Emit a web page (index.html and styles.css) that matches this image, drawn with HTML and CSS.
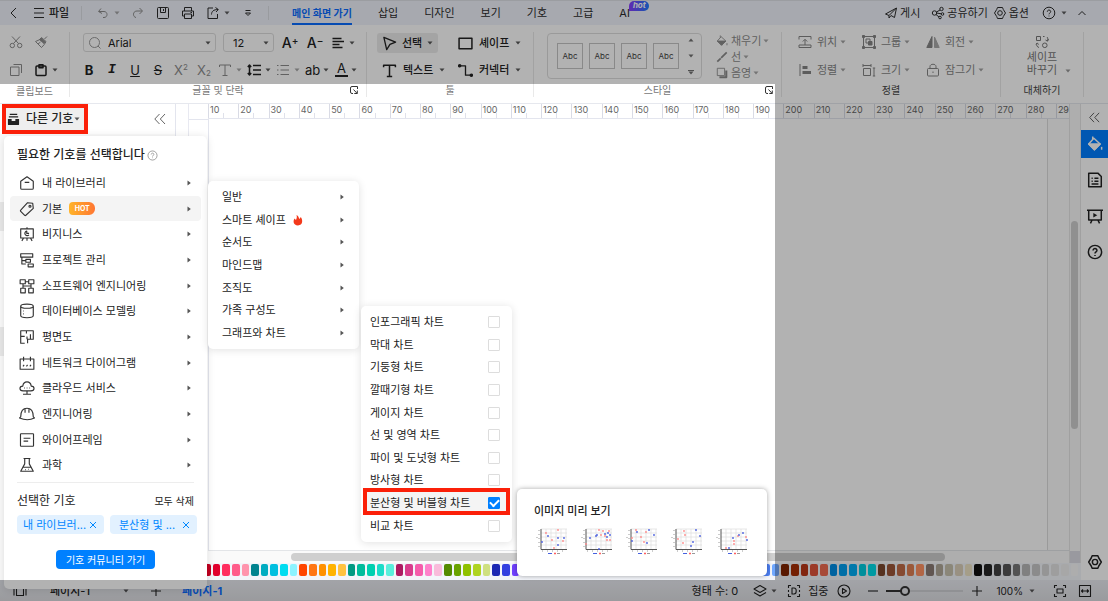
FILE: index.html
```html
<!DOCTYPE html>
<html lang="ko">
<head>
<meta charset="utf-8">
<title>다이어그램 편집기</title>
<meta name="viewport" content="width=device-width, initial-scale=1">
<link rel="stylesheet" href="styles.css">
</head>
<body>
<svg class="sprite" aria-hidden="true">
  <symbol id="caret" viewBox="0 0 6 4"><path d="M0.5 0.5h5L3 3.6z" fill="currentColor"/></symbol>
  <symbol id="arrow" viewBox="0 0 4 6"><path d="M0.5 0.4v5.2L3.8 3z" fill="currentColor"/></symbol>
  <symbol id="back" viewBox="0 0 14 14"><path d="M9 2 4 7l5 5"/></symbol>
  <symbol id="up" viewBox="0 0 14 14"><path d="M3.500 9 7 5.500 10.500 9"/></symbol>
  <symbol id="burger" viewBox="0 0 14 14"><path d="M2 2.500h10M2 7h10M2 11.500h10"/></symbol>
  <symbol id="undo" viewBox="0 0 14 14"><path d="M5 2.500 2.500 5.500 6 7.500M3 5.500h5c4 0 4 6 0 6H7"/></symbol>
  <symbol id="redo" viewBox="0 0 14 14"><path d="M8.500 2 11.500 5 8.500 8M11 5H6c-4.500 0-4.500 6-1 6.500"/></symbol>
  <symbol id="save" viewBox="0 0 14 14"><rect x="1.500" y="1.500" width="11" height="11" rx="1"/><path d="M4.500 2v4.500h5V2M7.500 3v2"/></symbol>
  <symbol id="print" viewBox="0 0 14 14"><path d="M3.500 5V1.500h7V5M3.500 10h-2V5h11v5h-2M3.500 8h7v4.500h-7zM9.500 6.500h1.500"/></symbol>
  <symbol id="export" viewBox="0 0 14 14"><path d="M7 2H2v10.500h9.500V8M5.500 8.500c0-3 2-5 6.500-5M9.500 1.500 12.300 3.500 10 6"/></symbol>
  <symbol id="more" viewBox="0 0 14 14"><path d="M4.500 4.500h5M4.500 7h5L7 9.500z"/></symbol>
  <symbol id="send" viewBox="0 0 14 14"><path d="M1.500 8 12.500 2l-2 9.500L7 9.500 5 12V9.500zM5 9.500 12 2.500"/></symbol>
  <symbol id="share" viewBox="0 0 14 14"><circle cx="3.500" cy="7" r="2.200"/><circle cx="10.500" cy="3" r="1.700"/><circle cx="11.500" cy="8" r="1.300"/><circle cx="9" cy="11.500" r="1.300"/><path d="M5.500 6 9 4M5.700 7l4.500.8M5 8.500 8 11"/></symbol>
  <symbol id="gear" viewBox="0 0 14 14"><path d="M4.500 1.500h5l.8 2 2.200 3.500-2.200 3.500-.8 2h-5l-.8-2L1.500 7l2.200-3.500z"/><circle cx="7" cy="7" r="2.300"/></symbol>
  <symbol id="help" viewBox="0 0 14 14"><circle cx="7" cy="7" r="5.800"/><path d="M5.300 5.700c0-2.300 3.500-2.200 3.400 0C8.700 7 7 6.900 7 8.300M7 9.600v.8"/></symbol>
  <symbol id="cut" viewBox="0 0 14 14"><circle cx="3.300" cy="10.500" r="2.200"/><circle cx="10.700" cy="10.500" r="2.200"/><path d="M4.500 8.500 11 1.500M9.500 8.500 3 1.500"/></symbol>
  <symbol id="brush" viewBox="0 0 14 14"><path d="M10.500 4 13 1.500M7.500 2.500 12 6.500M7.500 2.500 6 4.500 1.500 6.500 7.500 12.500 10.300 9.500 12 6.500M4 9 6.500 7"/><path d="M7 3 11.500 7 10 8.500 5.500 4.500z" fill="currentColor"/></symbol>
  <symbol id="copy" viewBox="0 0 14 14"><rect x="1.500" y="4" width="8.500" height="8.500"/><path d="M4.500 1.500h8V10"/></symbol>
  <symbol id="paste" viewBox="0 0 14 14"><rect x="2" y="3" width="10" height="9.500" rx="1"/><path d="M5 1.800h4v3H5z"/></symbol>
  <symbol id="search" viewBox="0 0 14 14"><circle cx="6.500" cy="6.500" r="5"/><path d="m10 10 2.500 2.500"/></symbol>
  <symbol id="align" viewBox="0 0 14 14"><path d="M1.500 2.500h9M1.500 5.500h11.500M1.500 8.500h7M1.500 11.500h10"/></symbol>
  <symbol id="spacing" viewBox="0 0 14 14"><path d="M6 2.500h8M6 7h8M6 11.500h8M2.500 2v10M.8 4 2.500 2l1.700 2M.8 10l1.700 2 1.700-2"/></symbol>
  <symbol id="list" viewBox="0 0 14 14"><path d="M4.500 2.500H13M4.500 7H13M4.500 11.500H13M1 2.500h1.500M1 7h1.500M1 11.500h1.500"/></symbol>
  <symbol id="cursor" viewBox="0 0 16 16"><path d="M2 1.500 14.500 6.500 8.500 9 5 14.500z"/></symbol>
  <symbol id="text" viewBox="0 0 14 14"><path d="M1.500 4V2h11v2M7 2v10.500M4.500 12.500h5"/></symbol>
  <symbol id="square" viewBox="0 0 14 14"><rect x="1" y="2" width="12" height="10"/></symbol>
  <symbol id="connector" viewBox="0 0 16 14"><path d="M2 2h6v10h6"/><circle cx="1.800" cy="2" r="1.200" fill="currentColor"/><circle cx="14.200" cy="12" r="1.200" fill="currentColor"/></symbol>
  <symbol id="fill" viewBox="0 0 14 14"><path d="M5 .5v2.500M6 2 11.500 7 6.500 12 1.500 7z"/><path d="M1.500 7h10l-5 5z" fill="currentColor"/><path d="M12.800 9.500v2.500"/></symbol>
  <symbol id="line" viewBox="0 0 14 14"><path d="M12.500 1.500 6 8M5.500 8.500 1.500 12.500" stroke-width="2"/></symbol>
  <symbol id="shadow" viewBox="0 0 14 14"><rect x="1.500" y="1.500" width="8.500" height="8.500"/><path d="M12 4v8H4" stroke-width="2.400"/></symbol>
  <symbol id="place" viewBox="0 0 14 14"><path d="M1 4.500V1.500h12v3M7 10V4.500M4.800 6.500 7 4.300l2.200 2.200M1 10h12v2.500H1z"/></symbol>
  <symbol id="arrange" viewBox="0 0 14 14"><path d="M2 1v12"/><path d="M4.500 4.500h5M4.500 9.500h8.500" stroke-width="3"/></symbol>
  <symbol id="group" viewBox="0 0 14 14"><rect x="1.500" y="1.500" width="11" height="11"/><rect x="4" y="4" width="4" height="4"/><rect x="6.500" y="6.500" width="3.500" height="3.500" fill="currentColor"/><path d="M.5 .5h2v2h-2zM11.500.5h2v2h-2zM.5 11.500h2v2h-2zM11.500 11.500h2v2h-2z" fill="currentColor"/></symbol>
  <symbol id="size" viewBox="0 0 14 14"><rect x="1.500" y="5.500" width="7" height="7"/><path d="M1 2.500h8M1 1v3M9 1v3M12 5v8M10.800 5h2.400M10.800 13h2.400"/></symbol>
  <symbol id="flip" viewBox="0 0 14 14"><path d="M6 1.500v11H.8z" fill="currentColor"/><path d="M8.500 2v10.500h4.700z" fill="currentColor" opacity=".7"/></symbol>
  <symbol id="lock" viewBox="0 0 14 14"><rect x="1.500" y="5.500" width="11" height="7.500" rx="1"/><path d="M4 5.500v-2c0-3 6-3 6 0v2M7 8.500v1.500"/></symbol>
  <symbol id="swap" viewBox="0 0 14 14"><path d="M1.500 1.500h4v4h-4zM8 1.500h1.500M12 2c1 1 1 2.500.5 4M10.500 5l2 1.200L13.500 4M2 8c-1 2 0 4 2 4.500M1 9.500 2.200 8l1.600 1.500"/><circle cx="9.800" cy="10.300" r="2.300"/></symbol>
  <symbol id="launch" viewBox="0 0 10 10"><path d="M4 8.500H3q-1.500 0-1.500-1.500V3q0-1.500 1.500-1.500h5.500V4M4.500 4.500 8 8.300M8.300 5.500v3h-3"/></symbol>
  <symbol id="collapse" viewBox="0 0 14 14"><path d="M6.500 2 1.800 7l4.700 5M12 2 7.300 7l4.700 5"/></symbol>
  <symbol id="drawer" viewBox="0 0 14 14"><path d="M3 1.500h8M2 4.200h10" stroke-width="1.200"/><path d="M1 6.500h4v2h4v-2h4V12q0 1-1 1H2q-1 0-1-1z" fill="currentColor" stroke="none"/></symbol>
  <symbol id="home" viewBox="0 0 14 14"><path d="M1.500 11.500v-6L7 1.500l5.500 4v6q0 1-1 1h-9q-1 0-1-1zM5 6.500h4"/></symbol>
  <symbol id="tag" viewBox="0 0 14 14"><path d="M7.500 1.500 12 2l.5 4.500L6 12.500Q5.500 13 5 12.500L1.500 9q-.5-.5 0-1z"/><circle cx="9.600" cy="4.600" r=".9"/></symbol>
  <symbol id="board" viewBox="0 0 14 14"><path d="M1.500 2.500h11v8h-11zM7 1v1.500M4 10.500l-1.500 2.500M10 10.500l1.500 2.500M7 10.500V13M8.700 7.700A2 2 0 1 1 6.800 4.500V6.500h2"/></symbol>
  <symbol id="gantt" viewBox="0 0 14 14"><path d="M1.500 1.500h10.500v3H1.500zM2.500 4.500v6H6M2.500 7.500H6M6 6.500h4v2.500H6zM8 10.500h4.500v2.500H8z"/></symbol>
  <symbol id="blocks" viewBox="0 0 14 14"><path d="M1 1.500h4.500v3.500H1zM8.500 1.500H13v3.500H8.500zM1.500 9h4v4h-4zM8.500 9h4v4h-4zM5.500 3.300h3M3.500 5v4M10.500 5v4M3.500 7h7"/></symbol>
  <symbol id="database" viewBox="0 0 14 14"><ellipse cx="7" cy="2.800" rx="5.500" ry="1.800"/><path d="M1.500 3v8c0 2.500 11 2.500 11 0V3M3.500 7h.6M3.500 9.500h.6"/></symbol>
  <symbol id="plan" viewBox="0 0 14 14"><path d="M6 1.500H1.500v11H5M6 1.500h6.500V9h-5v3.500M6.500 1.500V4M1.500 6.500h3.500M7 6.500V9M10 4.500V9"/></symbol>
  <symbol id="calendar" viewBox="0 0 14 14"><path d="M1 3.500h12v9H1zM4 1.500v4M10 1.500v4M3.500 10l1-1.300M6.500 10l1-1.300M9.500 10l1-1.300"/></symbol>
  <symbol id="cloud" viewBox="0 0 14 14"><path d="M3.500 9.500C0 9.500 0 5.500 3.300 5.300 4 .5 10 .5 10.700 5.300 14 5.500 14 9.500 10.500 9.500zM7 9.500v3M3.500 12.500h7M4.500 7h.7M6.700 7h.7M9 7h.7"/></symbol>
  <symbol id="helmet" viewBox="0 0 14 14"><path d="M1.500 9.500C1.500 5 3.500 2 7 2s5.500 3 5.500 7.500l1 1q-6 3-13 0zM5.300 2.500V6M8.700 2.500V6"/></symbol>
  <symbol id="wire" viewBox="0 0 14 14"><rect x="1.300" y="1.500" width="11.400" height="11" rx=".5"/><path d="M4 5.500h6M4 8h4"/></symbol>
  <symbol id="flask" viewBox="0 0 14 14"><path d="M4 1.300h6M5 1.500V6L1.500 12.500h11L9 6V1.500M3.500 9h7M5.500 11h.6M8 10.700h.6"/></symbol>
  <symbol id="doc" viewBox="0 0 14 14"><path d="M1.500 1h8l3 3v9h-11zM4 5.500h1M6.500 5.500H10M4 8h1M6.500 8H10M4 10.500h6"/></symbol>
  <symbol id="present" viewBox="0 0 14 14"><path d="M0 2h14M1.500 2v8.500h11V2M4.500 10.500 3 13.500M9.500 10.500l1.500 3"/><path d="M5.500 4.300v4L9 6.300z" fill="currentColor" stroke="none"/></symbol>
  <symbol id="layers" viewBox="0 0 14 14"><path d="M7 1.500 13 5 7 8.500 1 5zM1 8.500 7 12l6-3.500"/></symbol>
  <symbol id="focus" viewBox="0 0 14 14"><path d="M4 1.500H1.500V4M10 1.500h2.500V4M4 12.500H1.500V10M10 12.500h2.500V10M5 4h2c3 0 3 6 0 6H5zM1.500 6v2M12.500 6v2"/></symbol>
  <symbol id="play" viewBox="0 0 14 14"><circle cx="7" cy="7" r="6"/><path d="M5.500 4.500v5L9.500 7z"/></symbol>
  <symbol id="plus" viewBox="0 0 14 14"><path d="M2 7h10M7 2v10"/></symbol>
  <symbol id="minus" viewBox="0 0 14 14"><path d="M2 7h10"/></symbol>
  <symbol id="fit" viewBox="0 0 14 14"><path d="M4 1.500H1.500V4M10 1.500h2.500V4M4 12.500H1.500V10M10 12.500h2.500V10M4 5h6v4H4z"/></symbol>
  <symbol id="fitw" viewBox="0 0 14 14"><path d="M1.500 1.500h11v11h-11zM3.500 7h7M5 5.500 3.500 7 5 8.500M9 5.500 10.500 7 9 8.500"/></symbol>
  <symbol id="pages" viewBox="0 0 14 14"><path d="M3.500 2.500h7v9h-7zM1 2.500v9M13 2.500v9"/></symbol>
  <symbol id="close" viewBox="0 0 8 8"><path d="m1 1 6 6M7 1 1 7"/></symbol>
  <symbol id="flame" viewBox="0 0 10 12"><path d="M3.500 1C6 2 5.500 4 6.500 5L7.800 3C10 6 10 11 5 11.500 0 11 0 7 1.500 4.500L3 6C4 4 4 2.500 3.500 1z" fill="#f3391b" stroke="none"/></symbol>
</svg>

<header class="titlebar">
  <button class="ib back"><svg class="ic"><use href="#back"/></svg></button>
  <button class="file"><svg class="ic"><use href="#burger"/></svg>파일</button>
  <div class="quick">
    <button class="ib off"><svg class="ic"><use href="#undo"/></svg><svg class="ca"><use href="#caret"/></svg></button>
    <button class="ib off"><svg class="ic"><use href="#redo"/></svg></button>
    <button class="ib"><svg class="ic"><use href="#save"/></svg></button>
    <button class="ib"><svg class="ic"><use href="#print"/></svg></button>
    <button class="ib"><svg class="ic"><use href="#export"/></svg><svg class="ca"><use href="#caret"/></svg></button>
    <button class="ib"><svg class="ic"><use href="#more"/></svg></button>
  </div>
  <nav class="tabs">
    <a class="tab active" href="#">메인 화면 가기</a>
    <a class="tab" href="#">삽입</a>
    <a class="tab" href="#">디자인</a>
    <a class="tab" href="#">보기</a>
    <a class="tab" href="#">기호</a>
    <a class="tab" href="#">고급</a>
    <a class="tab" href="#">AI<span class="hot">hot</span></a>
  </nav>
  <div class="account">
    <button class="tx"><svg class="ic"><use href="#send"/></svg>게시</button>
    <button class="tx"><svg class="ic"><use href="#share"/></svg>공유하기</button>
    <button class="tx tight"><svg class="ic"><use href="#gear"/></svg>옵션</button>
    <button class="ib helpbtn"><svg class="ic"><use href="#help"/></svg><svg class="ca"><use href="#caret"/></svg></button>
    <button class="ib"><svg class="ic"><use href="#up"/></svg></button>
  </div>
</header>

<section class="ribbon">
  <div class="grp g-clip">
    <div class="tools clip">
      <button class="ib off"><svg class="ic"><use href="#cut"/></svg></button>
      <button class="ib off"><svg class="ic"><use href="#brush"/></svg></button>
      <button class="ib off"><svg class="ic"><use href="#copy"/></svg></button>
      <button class="ib bold"><svg class="ic"><use href="#paste"/></svg><svg class="ca"><use href="#caret"/></svg></button>
    </div>
    <div class="cap">클립보드</div>
  </div>
  <div class="grp g-font">
    <div class="tools rows">
      <div class="frow">
        <label class="combo font"><svg class="ic dim"><use href="#search"/></svg><input class="field" type="text" value="Arial" aria-label="글꼴"><svg class="ca"><use href="#caret"/></svg></label>
        <label class="combo fsize"><select class="field" aria-label="글꼴 크기"><option>12</option></select><svg class="ca"><use href="#caret"/></svg></label>
        <button class="ib glyph big">A<sup>+</sup></button>
        <button class="ib glyph big">A<sup>−</sup></button>
        <button class="ib bold"><svg class="ic"><use href="#align"/></svg><svg class="ca"><use href="#caret"/></svg></button>
      </div>
      <div class="frow fmt">
        <button class="ib glyph b">B</button>
        <button class="ib glyph i">I</button>
        <button class="ib glyph u">U</button>
        <button class="ib glyph s">S</button>
        <button class="ib glyph off">X<sup>2</sup></button>
        <button class="ib glyph off">X<sub>2</sub></button>
        <button class="ib off"><svg class="ic"><use href="#text"/></svg><svg class="ca"><use href="#caret"/></svg></button>
        <button class="ib bold"><svg class="ic"><use href="#spacing"/></svg><svg class="ca"><use href="#caret"/></svg></button>
        <button class="ib off"><svg class="ic"><use href="#list"/></svg><svg class="ca"><use href="#caret"/></svg></button>
        <button class="ib glyph">ab<svg class="ca"><use href="#caret"/></svg></button>
        <button class="ib glyph"><span class="ink">A</span><svg class="ca"><use href="#caret"/></svg></button>
      </div>
    </div>
    <div class="cap">글꼴 및 단락<svg class="launch"><use href="#launch"/></svg></div>
  </div>
  <div class="grp g-tool">
    <div class="tools two">
      <button class="tool on"><svg class="ic"><use href="#cursor"/></svg>선택<svg class="ca"><use href="#caret"/></svg></button>
      <button class="tool"><svg class="ic"><use href="#square"/></svg>셰이프<svg class="ca"><use href="#caret"/></svg></button>
      <button class="tool"><svg class="ic"><use href="#text"/></svg>텍스트<svg class="ca"><use href="#caret"/></svg></button>
      <button class="tool"><svg class="ic"><use href="#connector"/></svg>커넥터<svg class="ca"><use href="#caret"/></svg></button>
    </div>
    <div class="cap">툴</div>
  </div>
  <div class="grp g-style">
    <div class="tools styles">
      <div class="gallery">
        <button class="tile">Abc</button><button class="tile">Abc</button><button class="tile">Abc</button><button class="tile">Abc</button>
        <div class="spin"><svg class="ca flip"><use href="#caret"/></svg><svg class="ca"><use href="#caret"/></svg><svg class="ca bar"><use href="#caret"/></svg></div>
      </div>
      <div class="paint">
        <button class="pt"><svg class="ic"><use href="#fill"/></svg>채우기<svg class="ca"><use href="#caret"/></svg></button>
        <button class="pt"><svg class="ic"><use href="#line"/></svg>선<svg class="ca"><use href="#caret"/></svg></button>
        <button class="pt"><svg class="ic"><use href="#shadow"/></svg>음영<svg class="ca"><use href="#caret"/></svg></button>
      </div>
    </div>
    <div class="cap">스타일<svg class="launch"><use href="#launch"/></svg></div>
  </div>
  <div class="grp g-arr">
    <div class="tools three">
      <button class="ar"><svg class="ic"><use href="#place"/></svg>위치<svg class="ca"><use href="#caret"/></svg></button>
      <button class="ar"><svg class="ic"><use href="#group"/></svg>그룹<svg class="ca"><use href="#caret"/></svg></button>
      <button class="ar"><svg class="ic"><use href="#flip"/></svg>회전<svg class="ca"><use href="#caret"/></svg></button>
      <button class="ar"><svg class="ic"><use href="#arrange"/></svg>정렬<svg class="ca"><use href="#caret"/></svg></button>
      <button class="ar"><svg class="ic"><use href="#size"/></svg>크기<svg class="ca"><use href="#caret"/></svg></button>
      <button class="ar"><svg class="ic"><use href="#lock"/></svg>잠그기 <svg class="ca"><use href="#caret"/></svg></button>
    </div>
    <div class="cap">정렬</div>
  </div>
  <div class="grp g-rep">
    <button class="tools replace"><svg class="ic"><use href="#swap"/></svg><span>셰이프</span><span class="withca">바꾸기<svg class="ca"><use href="#caret"/></svg></span></button>
    <div class="cap">대체하기</div>
  </div>
</section>

<main class="work">
  <aside class="side">
    <div class="sidehead">
      <button class="othersym"><svg class="ic"><use href="#drawer"/></svg>다른 기호<svg class="ca"><use href="#caret"/></svg></button>
      <button class="ib soft"><svg class="ic"><use href="#collapse"/></svg></button>
    </div>
    <div class="sect"></div>
    <div class="sect"></div>
  </aside>
  <section class="stage">
    <div class="vruler"></div>
    <div class="center">
      <div class="ruler" id="ruler"></div>
      <div class="canvas">
        <div class="paper"></div>
      </div>
      <div class="hscroll"><div class="hthumb"></div></div>
    </div>
    <div class="vscroll"><div class="vthumb"></div></div>
    <div class="swatches" id="swatches"></div>
  </section>
  <aside class="rail">
    <button class="rb first soft"><svg class="ic"><use href="#collapse"/></svg></button>
    <button class="rb blue"><svg class="ic"><use href="#fill"/></svg></button>
    <button class="rb"><svg class="ic"><use href="#doc"/></svg></button>
    <button class="rb"><svg class="ic"><use href="#present"/></svg></button>
    <button class="rb"><svg class="ic"><use href="#help"/></svg></button>
    <button class="rb last"><svg class="ic"><use href="#gear"/></svg></button>
  </aside>
</main>

<footer class="status">
  <button class="ib"><svg class="ic"><use href="#pages"/></svg></button>
  <button class="pagesel">페이지-1<svg class="ca"><use href="#caret"/></svg></button>
  <button class="ib add"><svg class="ic"><use href="#plus"/></svg></button>
  <a class="pagetab" href="#">페이지-1</a>
  <div class="statusright">
    <span class="count">형태 수: 0</span>
    <button class="ib layers"><svg class="ic"><use href="#layers"/></svg><svg class="ca"><use href="#caret"/></svg></button>
    <button class="tx"><svg class="ic"><use href="#focus"/></svg>집중</button>
    <button class="ib playbtn"><svg class="ic"><use href="#play"/></svg></button>
    <button class="ib"><svg class="ic"><use href="#minus"/></svg></button>
    <input class="zoom" type="range" min="0" max="100" value="20" aria-label="확대/축소">
    <button class="ib"><svg class="ic"><use href="#plus"/></svg></button>
    <button class="pct">100%<svg class="ca"><use href="#caret"/></svg></button>
    <button class="ib"><svg class="ic"><use href="#fit"/></svg></button>
    <button class="ib"><svg class="ic"><use href="#fitw"/></svg></button>
  </div>
</footer>

<div class="pop symbols">
  <h2 class="poptitle">필요한 기호를 선택합니다<svg class="q"><use href="#help"/></svg></h2>
  <ul class="cats">
    <li class="cat"><svg class="ic"><use href="#home"/></svg>내 라이브러리<svg class="ar4"><use href="#arrow"/></svg></li>
    <li class="cat sel"><svg class="ic"><use href="#tag"/></svg>기본<span class="hotpill">HOT</span><svg class="ar4"><use href="#arrow"/></svg></li>
    <li class="cat"><svg class="ic"><use href="#board"/></svg>비지니스<svg class="ar4"><use href="#arrow"/></svg></li>
    <li class="cat"><svg class="ic"><use href="#gantt"/></svg>프로젝트 관리<svg class="ar4"><use href="#arrow"/></svg></li>
    <li class="cat"><svg class="ic"><use href="#blocks"/></svg>소프트웨어 엔지니어링<svg class="ar4"><use href="#arrow"/></svg></li>
    <li class="cat"><svg class="ic"><use href="#database"/></svg>데이터베이스 모델링<svg class="ar4"><use href="#arrow"/></svg></li>
    <li class="cat"><svg class="ic"><use href="#plan"/></svg>평면도<svg class="ar4"><use href="#arrow"/></svg></li>
    <li class="cat"><svg class="ic"><use href="#calendar"/></svg>네트워크 다이어그램<svg class="ar4"><use href="#arrow"/></svg></li>
    <li class="cat"><svg class="ic"><use href="#cloud"/></svg>클라우드 서비스<svg class="ar4"><use href="#arrow"/></svg></li>
    <li class="cat"><svg class="ic"><use href="#helmet"/></svg>엔지니어링<svg class="ar4"><use href="#arrow"/></svg></li>
    <li class="cat"><svg class="ic"><use href="#wire"/></svg>와이어프레임<svg class="ar4"><use href="#arrow"/></svg></li>
    <li class="cat"><svg class="ic"><use href="#flask"/></svg>과학<svg class="ar4"><use href="#arrow"/></svg></li>
  </ul>
  <div class="chosen">
    <div class="chosenhead"><span>선택한 기호</span><button class="clear">모두 삭제</button></div>
    <div class="chips">
      <button class="chip">내 라이브러...<svg class="x"><use href="#close"/></svg></button>
      <button class="chip">분산형 및 ...<svg class="x"><use href="#close"/></svg></button>
    </div>
    <button class="community">기호 커뮤니티 가기</button>
  </div>
</div>

<ul class="pop sub">
  <li class="row">일반<svg class="ar4"><use href="#arrow"/></svg></li>
  <li class="row">스마트 셰이프<svg class="flame"><use href="#flame"/></svg><svg class="ar4"><use href="#arrow"/></svg></li>
  <li class="row">순서도<svg class="ar4"><use href="#arrow"/></svg></li>
  <li class="row">마인드맵<svg class="ar4"><use href="#arrow"/></svg></li>
  <li class="row">조직도<svg class="ar4"><use href="#arrow"/></svg></li>
  <li class="row">가족 구성도<svg class="ar4"><use href="#arrow"/></svg></li>
  <li class="row">그래프와 차트<svg class="ar4"><use href="#arrow"/></svg></li>
</ul>

<div class="pop charts">
  <label class="opt">인포그래픽 차트<input class="ck" type="checkbox"></label>
  <label class="opt">막대 차트<input class="ck" type="checkbox"></label>
  <label class="opt">기둥형 차트<input class="ck" type="checkbox"></label>
  <label class="opt">깔때기형 차트<input class="ck" type="checkbox"></label>
  <label class="opt">게이지 차트<input class="ck" type="checkbox"></label>
  <label class="opt">선 및 영역 차트<input class="ck" type="checkbox"></label>
  <label class="opt">파이 및 도넛형 차트<input class="ck" type="checkbox"></label>
  <label class="opt">방사형 차트<input class="ck" type="checkbox"></label>
  <label class="opt marked">분산형 및 버블형 차트<input class="ck" type="checkbox" checked></label>
  <label class="opt">비교 차트<input class="ck" type="checkbox"></label>
</div>

<div class="pop preview">
  <h3 class="prevtitle">이미지 미리 보기</h3>
  <div class="thumbs" id="thumbs"></div>
</div>

<div class="spotlight"></div>
<script src="script.js"></script>
</body>
</html>
```

FILE: styles.css
```css
* { box-sizing: border-box; }
html, body { height: 100%; }
body {
  margin: 0;
  position: relative;
  overflow: hidden;
  display: grid;
  grid-template-rows: 25px 79px minmax(0, 1fr) 21px;
  background: #fff;
  color: #222;
  font-family: Inter, "Noto Sans CJK KR", sans-serif;
  font-size: 11px;
  line-height: 16px;
}
button, input, select { font: inherit; color: inherit; }
button { border: 0; background: none; padding: 0; white-space: nowrap; }
a { color: inherit; text-decoration: none; }
ul, h2, h3 { margin: 0; padding: 0; list-style: none; }
.sprite { position: absolute; width: 0; height: 0; }
svg { fill: none; stroke: currentColor; stroke-linejoin: round; flex: none; }
.ic { width: 14px; height: 14px; }
.ca { width: 6px; height: 4px; stroke: none; opacity: .75; }
.ib { display: flex; align-items: center; justify-content: center; gap: 4px; height: 18px; }
.off { color: #8c8c8c; }
.soft { color: #666; }
.bold .ic { stroke-width: 1.5; }

/* title bar */
.titlebar { display: flex; align-items: center; background: #f0f3fb; border-top: 1px solid #dfe1e7; color: #2b2b2b; }
.back { width: 14px; margin: 0 11px 0 7px; }
.file { display: flex; align-items: center; gap: 3px; width: 49px; font-weight: 500; }
.quick { display: flex; gap: 11px; width: 188px; height: 14px; align-items: center; padding-left: 14px; border-left: 1px solid #dcdee4; border-right: 1px solid #dcdee4; margin-right: 23px; }
.tabs { display: flex; gap: 26px; align-self: stretch; align-items: center; }
.tab { height: 24px; line-height: 24px; white-space: nowrap; position: relative; }
.tab.active { color: #0a6cff; font-size: 10px; font-weight: 700; border-bottom: 2px solid #0a6cff; line-height: 25px; }
.hot { position: absolute; left: 10px; top: 0; width: 20px; height: 10px; border-radius: 5px 5px 5px 0; background: linear-gradient(90deg, #8a3cff, #1f7dff); color: #fff; font: italic 700 8px/9px Inter, sans-serif; text-align: center; }
.account { display: flex; align-items: center; margin-left: auto; padding-right: 19px; }
.tx { display: flex; align-items: center; gap: 2px; margin-right: 11px; }
.tx.tight { margin-left: -6px; margin-right: 13px; }
.helpbtn { margin-right: 8px; gap: 5px; }

/* ribbon */
.ribbon { display: flex; border-bottom: 1px solid #e6e8ee; padding: 7px 0 6px; }
.grp { display: flex; flex-direction: column; border-right: 1px solid #e9e9e9; }
.g-clip { width: 70px; }
.g-font { width: 297px; }
.g-tool { width: 167px; }
.g-style { width: 248px; }
.g-arr { width: 219px; }
.g-rep { width: 83px; }
.tools { height: 53px; }
.cap { position: relative; font-size: 10px; line-height: 14px; text-align: center; color: #777; }
.g-arr .cap, .g-rep .cap { color: #444; }
.launch { position: absolute; right: 7px; top: 2px; width: 10px; height: 10px; color: #333; }
.clip { display: grid; grid-template-columns: 25px 30px; grid-template-rows: 28px 24px; padding-left: 9px; }
.clip .ib { justify-content: flex-start; height: 20px; }
.rows { padding: 1px 0 0 13px; display: flex; flex-direction: column; gap: 8px; }
.frow { display: flex; align-items: center; gap: 7px; height: 19px; }
.combo { display: flex; align-items: center; height: 19px; border: 1px solid #ddd; border-radius: 3px; }
.font { width: 133px; padding: 0 4px; }
.fsize { width: 51px; padding: 0 4px 0 8px; }
.dim { color: #999; }
.field { flex: 1; min-width: 0; width: 100%; border: 0; background: none; outline: 0; padding: 0 0 0 6px; appearance: none; }
.fsize .field { padding: 0 0 0 1px; }
.glyph { font-size: 13px; width: 18px; position: relative; gap: 3px; }
.glyph.big { font-size: 14px; font-weight: 500; }
.glyph sup, .glyph sub { font-size: 8px; line-height: 8px; }
.glyph.big sup { font-size: 10px; }
.glyph sup { margin: -6px 0 0 -3px; }
.glyph sub { margin: 6px 0 0 -3px; }
.fmt { gap: 5px; margin-left: -3px; }
.fmt .ib { min-width: 18px; }
.fmt .glyph:nth-child(n+10) { width: 24px; }
.b { font-weight: 700; }
.i { font-style: italic; font-family: "Liberation Mono", monospace; font-weight: 700; }
.u { text-decoration: underline; }
.s { text-decoration: line-through; }
.ink { border-bottom: 2px solid #222; line-height: 13px; padding: 0 2px; }
.two { display: grid; grid-template-columns: 76px 80px; grid-template-rows: 20px 20px; row-gap: 7px; padding: 1px 0 0 10px; }
.tool { display: flex; align-items: center; gap: 6px; padding: 0 5px; justify-self: start; font-weight: 500; }
.tool .ic { width: 15px; height: 15px; stroke-width: 1.4; }
.on { background: #ebebeb; border-radius: 3px; gap: 5px; }
.styles { display: flex; padding: 1px 0 0 13px; gap: 14px; }
.gallery { display: flex; align-items: center; gap: 6px; width: 155px; height: 46px; border: 1px solid #ddd; border-radius: 4px; padding-left: 9px; }
.tile { width: 26px; height: 26px; border: 1px solid #c4c4c4; font-size: 8px; color: #444; }
.spin { display: flex; flex-direction: column; gap: 12px; margin-left: 3px; color: #444; }
.ca.flip { transform: rotate(180deg); }
.ca.bar { border-top: 1px solid #444; height: 5px; }
.paint { display: flex; flex-direction: column; color: #8c8c8c; }
.pt { display: flex; align-items: center; gap: 2px; height: 16px; }
.pt .ic { width: 12px; height: 12px; margin-right: 1px; }
.three { display: grid; grid-template-columns: 64px 64px 70px; grid-template-rows: 20px 20px; row-gap: 8px; padding: 0 0 0 16px; color: #858585; }
.ar { display: flex; align-items: center; gap: 3px; }
.ar .ic { margin-right: 2px; }
.replace { display: flex; flex-direction: column; align-items: center; color: #777; line-height: 13px; padding-top: 3px; }
.replace .ic { margin-bottom: 2px; }
.withca { display: flex; align-items: center; gap: 8px; padding-left: 14px; }

/* workspace */
.work { display: grid; grid-template-columns: 175px minmax(0, 1fr) 27px; min-height: 0; }
.side { background: #fafafa; }
.sidehead { display: flex; justify-content: space-between; align-items: center; height: 30px; background: #fff; padding: 0 8px 0 2px; margin-bottom: 68px; }
.othersym { position: relative; z-index: 5; display: flex; align-items: center; gap: 3px; height: 30px; width: 86px; padding-left: 1px; border: 4px solid #fb2009; background: #eee; font-size: 12px; font-weight: 500; }
.othersym .ic { margin-right: 3px; width: 13px; height: 13px; }
.othersym .ca { margin-left: -2px; }
.sect { height: 29px; background: #e8e8e8; margin-bottom: 96px; }
.stage { display: grid; grid-template-columns: 32px minmax(0, 1fr) 12px; grid-template-rows: minmax(0, 1fr) 17px; border-left: 1px solid #e3e5ee; }
.vruler { border-left: 1px solid #e8e9f1; margin-left: 12px; }
.vruler::before { content: ""; display: block; height: 15px; border-bottom: 1px solid #e3e5ee; }
.center { display: flex; flex-direction: column; min-width: 0; }
.ruler { display: flex; height: 15px; border-bottom: 1px solid #e3e5ee; }
.mark { flex: 1 1 0; min-width: 0; border-left: 1px solid #d9dbe5; padding-left: 1px; font-size: 9px; line-height: 12px; color: #666; background: linear-gradient(#dfe1ea, #dfe1ea) 50% 100% / 1px 5px no-repeat; }
.mark.part { flex: 0 0 13px; background: none; }
.canvas { flex: 1; background: #fdfdfd; border-bottom: 1px solid #e3e5e8; border-left: 1px solid #e3e5ee; }
.paper { height: 100%; margin-right: 21px; background: #fff; border-right: 1px solid #ddd; }
.hscroll { height: 12px; padding: 2px 0; background: #fafafa; }
.hthumb { width: 76%; height: 8px; margin-left: 83px; border-radius: 4px; background: #cfcfcf; }
.vscroll { padding: 117px 2px 0 1px; border-left: 1px solid #e6e6e6; border-right: 1px solid #e6e6e6; background: #fafafa linear-gradient(#dcdce4, #dcdce4) 0 100% / 100% 12px no-repeat; }
.vthumb { height: 208px; border-radius: 4px; background: #cfcfcf; }
.swatches { grid-column: 1 / -1; display: flex; gap: 2px; padding: 1px 2px 4px 27px; background: #f3f5fa; }
.sw { flex: 1; border-radius: 2px; }
.rail { display: flex; flex-direction: column; }
.rb { display: flex; align-items: center; justify-content: center; height: 36px; color: #222; }
.rb .ic { stroke-width: 1.3; width: 16px; height: 16px; }
.rb.first { height: 26px; color: #555; }
.rb.first .ic { width: 13px; height: 13px; stroke-width: 1; }
.rb.blue { height: 28px; background: #007dff; color: #fff; margin-bottom: 4px; }
.rb.last { margin-top: auto; }

/* status bar */
.status { display: flex; align-items: center; background: linear-gradient(#e9ebf1, #dddee2); padding-left: 13px; }
.status .ic { stroke-width: 1.1; }
.pagesel { display: flex; align-items: center; gap: 33px; margin-left: 23px; font-weight: 500; }
.add { margin: 0 19px 0 20px; }
.pagetab { color: #0a6cff; font-weight: 700; }
.statusright { display: flex; align-items: center; margin-left: auto; padding-right: 16px; }
.count { margin-right: 15px; }
.layers { margin-right: 10px; }
.status .tx { margin-right: 9px; gap: 7px; }
.playbtn { margin-right: 15px; }
.zoom { width: 77px; height: 12px; margin: 0 7px 0 6px; appearance: none; background: linear-gradient(90deg, #333 20px, #cfd0d5 20px) 0 50% / 100% 2px no-repeat; }
.zoom::-webkit-slider-thumb { appearance: none; width: 10px; height: 10px; border: 2px solid #333; border-radius: 50%; background: #e4e5ea; }
.pct { display: flex; align-items: center; gap: 6px; margin: 0 18px 0 12px; font-size: 10px; }
.status .ib:nth-last-child(2) { margin-right: 11px; }

/* pop-up menus */
.pop { position: absolute; background: #fff; border-radius: 5px; box-shadow: 0 1px 8px rgba(0, 0, 0, .12); }
.symbols { left: 4px; top: 136px; bottom: 12px; width: 203px; display: flex; flex-direction: column; }
.poptitle { display: flex; align-items: center; gap: 2px; height: 34px; padding: 4px 0 0 13px; font-size: 12px; font-weight: 500; }
.q { width: 11px; height: 11px; color: #888; }
.cats { flex: 1; display: flex; flex-direction: column; margin: 0 6px; }
.cat { flex: 1; display: flex; align-items: center; padding: 0 10px 0 9px; border-radius: 4px; }
.cat .ic { width: 16px; height: 16px; margin-right: 7px; color: #333; }
.cat.sel { background: #f4f4f4; }
.ar4 { width: 4px; height: 6px; margin-left: auto; stroke: none; color: #555; }
.hotpill { margin-left: 7px; width: 26px; height: 13px; border-radius: 4px 6px 6px 4px; background: linear-gradient(90deg, #ffb52a, #ff7632); color: #fff; font-size: 7px; font-weight: 700; line-height: 13px; text-align: center; }
.chosen { height: 111px; margin: 0 13px; padding-top: 4px; display: flex; flex-direction: column; align-items: flex-start; }
.chosenhead { align-self: stretch; display: flex; justify-content: space-between; align-items: center; border-top: 1px solid #ededed; padding-top: 8px; height: 28px; font-size: 12px; }
.clear { font-size: 10px; }
.chips { display: flex; gap: 6px; margin-top: 5px; }
.chip { display: flex; align-items: center; justify-content: space-between; width: 87px; height: 19px; padding: 0 7px 0 6px; border-radius: 4px; background: #e2f1ff; color: #0087ff; }
.chip:last-child { padding-left: 9px; }
.x { width: 8px; height: 8px; }
.community { align-self: center; margin-top: 16px; width: 99px; height: 19px; border-radius: 4px; background: #0080ff; color: #fff; font-size: 10px; }
.sub { left: 208px; top: 181px; width: 151px; height: 168px; padding: 5px 15px 5px 14px; display: grid; grid-auto-rows: 1fr; }
.row { display: flex; align-items: center; }
.flame { width: 10px; height: 12px; margin-left: 7px; }
.charts { left: 361px; top: 306px; width: 151px; height: 236px; padding: 5px 0; display: grid; grid-auto-rows: 1fr; }
.opt { position: relative; display: flex; align-items: center; justify-content: space-between; margin: 0 2px; padding: 0 10px 0 7px; white-space: nowrap; }
.marked { background: #f4f4f4; }
.marked::after { content: ""; position: absolute; inset: -4px 0 -1px; border: 4px solid #fb2009; }
.ck { appearance: none; width: 12px; height: 12px; margin: 0; border: 1px solid #ddd; border-radius: 1px; background: #fff; display: grid; place-items: center; }
.ck:checked { background: #0080ff; border-color: #0080ff; }
.ck:checked::before { content: ""; width: 7px; height: 4px; margin-top: -2px; border: solid #fff; border-width: 0 0 2px 2px; transform: rotate(-45deg); }
.preview { left: 517px; top: 489px; width: 250px; padding: 13px 17px; height: 87px; box-shadow: 0 0 5px rgba(0, 0, 0, .35); }
.prevtitle { font-size: 11px; font-weight: 500; line-height: 18px; }
.thumbs { display: flex; gap: 13px; margin: 8px 0 0 2px; }
.thumb { width: 32px; height: 27px; }

.spotlight { position: absolute; z-index: 20; left: 0; top: 84px; right: 333px; bottom: 21px; pointer-events: none; box-shadow: 0 0 0 3000px rgba(0, 0, 0, .3); }
```

FILE: script.js
```js
const palette = (
  "c00020 e1002d ff2d5f ff5c8a ff94ad 00838f 00acc1 00bfdf 00dcf0 8cf3ff " +
  "ff4500 ff7614 ff9100 ffb300 ffc240 009982 00bc9c 00d0b0 1cdcc8 5aefdc " +
  "ad1a62 d83c8c f55cab ff80cb f9bbdb 558b00 6aa300 8fc100 afd422 cfe080 " +
  "1c28b4 3340e0 7040ff 8a63ff a58cff 6a1b9a 8e24aa ab47bc ba68c8 ce93d8 " +
  "b71c1c d32f2f e53935 ef5350 e57373 1b5e20 2e7d32 43a047 66bb6a 81c784 " +
  "f57f17 f9a825 fbc02d fdd835 ffee58 0d47a1 1565c0 2a62e0 4d80f5 70a8ff " +
  "802500 a62e05 bb3718 e0543a f06a50 008fe5 00a0f0 00aef5 00cde0 00dde8 " +
  "7c482e 9c5638 c06c48 df8054 ff9264 8c7c74 b0a898 c8c2ae dcd0ba ece2c4 " +
  "101010 262626 424242 565656 787878 b8b8b8 c8c8c8 d6d6d6 e2e2e2 f0f0f0 f8f8f8"
).split(" ");

const swatches = document.getElementById("swatches");
for (const hex of palette) {
  const s = document.createElement("span");
  s.className = "sw";
  s.style.background = "#" + hex;
  swatches.append(s);
}

// The last division is only partly in view, so its label is shortened.
const ruler = document.getElementById("ruler");
for (let n = 10; n <= 290; n += 10) {
  const m = document.createElement("span");
  m.className = n === 290 ? "mark part" : "mark";
  m.textContent = n === 290 ? "29" : n;
  ruler.append(m);
}

// Each pair is a point; the points alternate between the red and the blue series.
const plots = [
  [[10,5],[12,8],[22,2],[22,10],[16,12],[28,10],[27,13],[22,17],[18,20],[6,14]],
  [[18,2],[16,7],[28,3],[27,5],[24,8],[26,9],[29,12],[9,10],[22,3],[15,8],[5,16],[18,21],[26,12],[24,6],[20,7],[29,7]],
  [[10,2],[11,4],[20,4],[23,2],[15,9],[28,7],[18,14],[21,15],[6,10],[6,13]],
  [[13,3],[25,2],[14,7],[29,8],[12,15],[22,14],[7,11],[20,18]],
  [[22,8],[23,7],[18,13],[17,10],[18,16],[27,5],[30,9],[31,12],[10,20],[13,20]]
];
const thumbs = document.getElementById("thumbs");
for (const points of plots) {
  let out = '<svg class="thumb" viewBox="0 0 32 27" aria-hidden="true">';
  for (let x = 10; x <= 31; x += 5) out += `<path d="M${x} 1v20" stroke="#ddd" stroke-width=".7"/>`;
  for (let y = 1; y < 20; y += 4) out += `<path d="M5 ${y}h26" stroke="#ddd" stroke-width=".7"/>`;
  out += '<path d="M5 1v20.500h26" stroke="#555"/><path d="M1 9v3M3 2v18" stroke="#999" stroke-dasharray="1 3"/><path d="M6 23h25" stroke="#999" stroke-dasharray="1 4"/>';
  out += '<path d="M12 25.500h4" stroke="#4460e0"/><path d="M18 25.500h2" stroke="#ff6060" stroke-width="1.500"/><path d="M21 25.500h3" stroke="#999"/>';
  points.forEach(([x, y], i) => {
    out += `<circle cx="${x}" cy="${y}" r=".9" stroke="none" fill="${i % 2 ? "#4a5fe0" : "#ff8a8a"}"/>`;
  });
  thumbs.insertAdjacentHTML("beforeend", out + "</svg>");
}
```
